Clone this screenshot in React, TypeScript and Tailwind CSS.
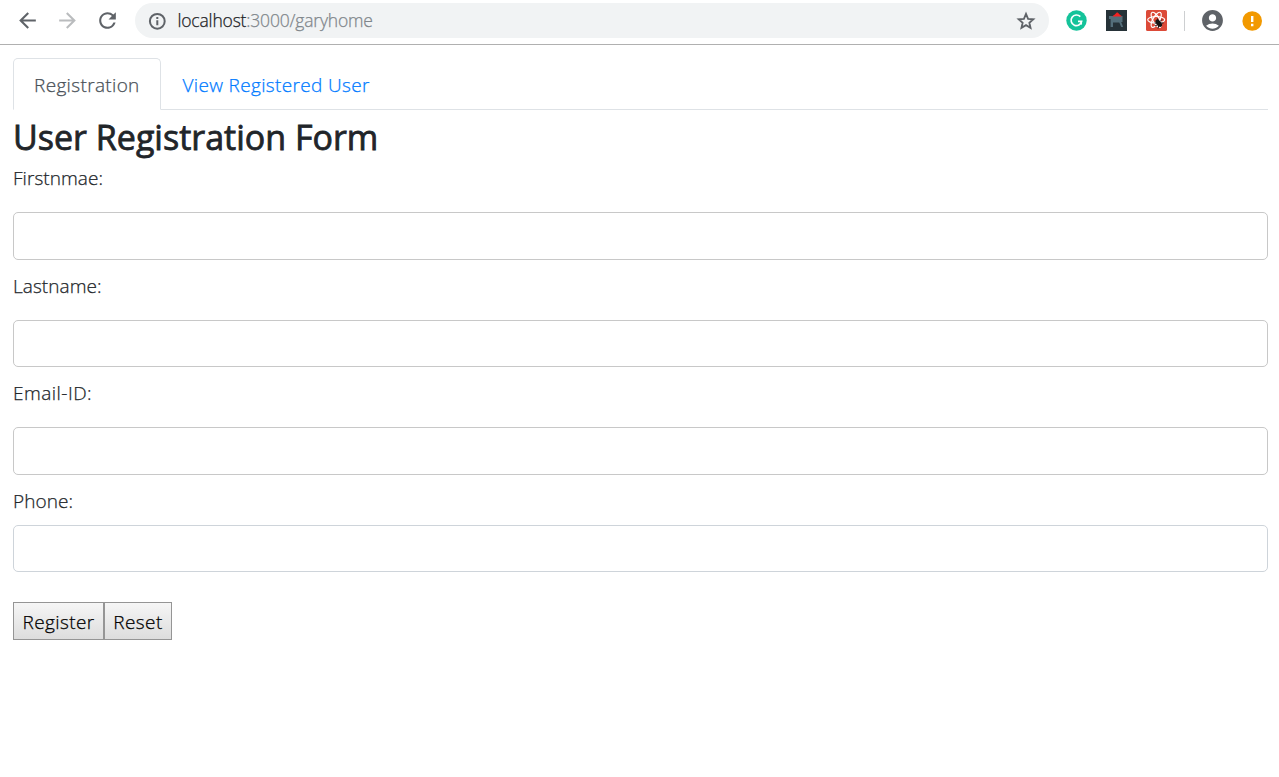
import { MdAccountCircle, MdArrowBack, MdArrowForward, MdRefresh } from "react-icons/md";

function InfoIcon() {
  return (
    <svg width="20" height="20" viewBox="0 0 20 20" fill="none" stroke="currentColor">
      <circle cx="10.300" cy="10.300" r="7.400" strokeWidth="2" />
      <path d="M10.300 9.300v5M10.300 6v2" strokeWidth="2" />
    </svg>
  );
}

function StarIcon() {
  return (
    <svg width="22" height="22" viewBox="0 0 24 24" fill="none" stroke="currentColor" strokeWidth="2">
      <path d="M12 4.300l2.250 5.300 5.750.500-4.350 3.800 1.300 5.600L12 16.550 7.050 19.500l1.300-5.600L4 10.100l5.750-.500z" />
    </svg>
  );
}

function GrammarIcon() {
  return (
    <svg width="21" height="21" viewBox="0 0 21 21" fill="none">
      <circle cx="10.5" cy="10.5" r="10.2" fill="#15c39a" />
      <path d="M14.300 6.700A5.300 5.300 0 1 0 15.600 11.300H12" stroke="white" strokeWidth="1.700" />
      <path d="M15.300 11v3.600" stroke="white" strokeWidth="1.500" />
    </svg>
  );
}

function GrillIcon() {
  return (
    <svg width="21" height="21" viewBox="0 0 21 21">
      <rect width="21" height="21" fill="#263238" />
      <path d="M3 6h13.500v6h-1.300l2 5h-2l-1.900-4.500H7V17H4.600V9H3z" fill="#546e7a" />
      <path d="M6.500 6.500c.8-1.400 2.500-1.700 3.800-3.500.5-.6 1.400-.6 1.900 0 1.200 1.800 2.700 2.100 3.600 3.500z" fill="#f32121" />
    </svg>
  );
}

function ReactBugIcon() {
  return (
    <svg width="21" height="21" viewBox="0 0 21 21" fill="none">
      <rect width="21" height="21" rx="1.500" fill="#dc4a38" />
      <g stroke="white" strokeWidth="1.200">
        <ellipse cx="10.200" cy="9.800" rx="8.500" ry="3.300" />
        <ellipse cx="10.200" cy="9.800" rx="8.500" ry="3.300" transform="rotate(60 10.200 9.800)" />
        <ellipse cx="10.200" cy="9.800" rx="8.500" ry="3.300" transform="rotate(120 10.200 9.800)" />
      </g>
      <ellipse cx="12.800" cy="13.200" rx="2.300" ry="4.300" transform="rotate(-38 12.800 13.200)" fill="#151515" />
      <path d="M8.500 13l3 .2M9 16l3-1.500M12 18.500l.8-3M11.500 8.500l.5 2.500M16 9.500l-2 2M17.500 13H15" stroke="#151515" strokeWidth="1" />
    </svg>
  );
}

function AlertIcon() {
  return (
    <svg width="20" height="20" viewBox="0 0 20 20" fill="none">
      <circle cx="10.200" cy="10" r="9.800" fill="#f29900" />
      <path d="M10.200 5v6M10.200 12.800v2.400" stroke="white" strokeWidth="2.400" />
    </svg>
  );
}

function BrowserBar() {
  return (
    <header className="flex h-[45px] items-start border-b border-[#b0b0b0] bg-white pt-[3px] text-[#5f6368]">
      <div className="flex h-[35px] w-[135px] shrink-0 items-center gap-[15px] pl-[15px]">
        <MdArrowBack size={25} />
        <MdArrowForward size={25} className="text-[#babcbe]" />
        <MdRefresh size={25} />
      </div>
      <div className="flex h-[35px] w-[914px] shrink-0 items-center rounded-full bg-[#f1f3f4] pr-3 pl-[12px]">
        <InfoIcon />
        <span className="ml-[10.500px] flex-1 text-[17.500px] font-light tracking-[-0.010em] text-[#80868b] [-webkit-text-stroke:0.25px]">
          <span className="text-[#202124]">localhost</span>:3000/garyhome
        </span>
        <StarIcon />
      </div>
      <div className="ml-[17px] flex h-[35px] items-center">
        <GrammarIcon />
        <span className="ml-[19px]"><GrillIcon /></span>
        <span className="ml-[19px]"><ReactBugIcon /></span>
        <span className="ml-[17px] h-5 w-px bg-[#cdcfd1]" />
        <MdAccountCircle size={25} className="ml-[15px]" />
        <span className="ml-[17px]"><AlertIcon /></span>
      </div>
    </header>
  );
}

const fields = [
  { id: "firstname", label: "Firstnmae:", row: "h-[108px]", text: "tracking-[0.003em]", input: "mt-[20px] h-[48px] border-[#c8c8c8]" },
  { id: "lastname", label: "Lastname:", row: "h-[107px]", text: "tracking-[0.003em]", input: "mt-[20px] h-[47px] border-[#c8c8c8]" },
  { id: "email", label: "Email-ID:", row: "h-[108px]", text: "tracking-[0.025em]", input: "mt-[20px] h-[48px] border-[#c8c8c8]" },
  { id: "phone", label: "Phone:", row: "h-[115px]", text: "tracking-[0.003em]", input: "mt-[10px] h-[47px] border-[#ced4da]" },
];

export default function App() {
  return (
    <div className="min-h-screen bg-white font-['Open_Sans',sans-serif] text-[#212529]">
      <BrowserBar />
      <main className="pt-[13px] pr-[11px] pl-[13px]">
        <nav className="flex h-[52px] border-b border-[#dee2e6] text-[19px] leading-[28px] font-light tracking-[0.018em] [-webkit-text-stroke:0.25px]">
          <a href="#registration" className="-mb-px h-[52px] w-[148px] whitespace-nowrap rounded-t-[5px] border border-b-white border-[#dee2e6] pt-[12px] pl-[20px] text-[#495057]">Registration</a>
          <a href="#users" className="pt-[13px] pl-[21.500px] whitespace-nowrap text-[#007bff]">View Registered User</a>
        </nav>
        <h1 className="h-[54px] pt-[6px] text-[34px] leading-[42px] font-normal [-webkit-text-stroke:0.8px]">User Registration Form</h1>
        <form>
          {fields.map((f) => (
            <div key={f.id} className={f.row}>
              <label htmlFor={f.id} className={`block h-[28px] text-[19px] leading-[28px] font-light [-webkit-text-stroke:0.25px] ${f.text}`}>{f.label}</label>
              <input id={f.id} className={`block w-full rounded-[5px] border bg-white px-4 text-[19px] outline-none ${f.input}`} />
            </div>
          ))}
          <div className="flex h-[38px] text-[19px] leading-[36px] font-light text-black tracking-[0.020em] [-webkit-text-stroke:0.25px]">
            <button type="button" className="w-[91px] border border-[#959595] bg-linear-to-b from-[#f6f6f6] to-[#dddddd] pt-px">Register</button>
            <button type="reset" className="w-[68px] border border-[#959595] bg-linear-to-b from-[#f6f6f6] to-[#dddddd] pt-px">Reset</button>
          </div>
        </form>
      </main>
    </div>
  );
}
